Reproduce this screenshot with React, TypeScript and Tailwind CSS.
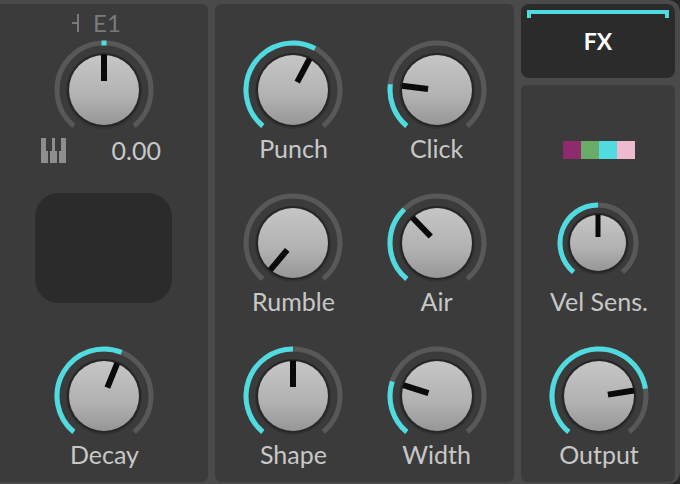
const CYAN = "#4fdbe0";
const TRACK = "#585858";

function polar(cx: number, cy: number, r: number, deg: number) {
  const a = ((deg - 90) * Math.PI) / 180;
  return [cx + r * Math.cos(a), cy + r * Math.sin(a)];
}

function arc(cx: number, cy: number, r: number, from: number, to: number) {
  const [x1, y1] = polar(cx, cy, r, from);
  const [x2, y2] = polar(cx, cy, r, to);
  const large = to - from > 180 ? 1 : 0;
  return `M${x1.toFixed(2)} ${y1.toFixed(2)}A${r} ${r} 0 ${large} 1 ${x2.toFixed(2)} ${y2.toFixed(2)}`;
}

function Dial({ angle, small = false, center = false }: { angle: number; small?: boolean; center?: boolean }) {
  const size = small ? 82 : 100;
  const c = size / 2;
  const r = small ? 38 : 47;
  const kr = small ? 28 : 35;
  const id = `g${small ? "s" : "l"}`;
  const [ix, iy] = polar(c, c, small ? 6 : 9, angle);
  const [ox, oy] = polar(c, c, kr + 0.5, angle);
  return (
    <svg width={size} height={size} viewBox={`0 0 ${size} ${size}`} className="block shrink-0">
      <defs>
        <linearGradient id={id} x1="0" y1="0" x2="0" y2="1">
          <stop offset="0" stopColor="#c6c6c6" />
          <stop offset="0.6" stopColor="#b1b1b1" />
          <stop offset="1" stopColor="#969696" />
        </linearGradient>
      </defs>
      <path d={arc(c, c, r, -140, 140)} fill="none" stroke={TRACK} strokeWidth={5} />
      {center ? (
        <rect x={c - 2.5} y={c - r - 2.5} width={5} height={5} fill={CYAN} />
      ) : angle > -140 ? (
        <path d={arc(c, c, r, -140, angle)} fill="none" stroke={CYAN} strokeWidth={5} />
      ) : null}
      <circle cx={c} cy={c + 1} r={kr + 3} fill="#333333" />
      <circle cx={c} cy={c} r={kr + 2} fill="#262626" />
      <circle cx={c} cy={c} r={kr} fill={`url(#${id})`} />
      <line x1={ix} y1={iy} x2={ox} y2={oy} stroke="#0a0a0a" strokeWidth={small ? 5 : 6} />
    </svg>
  );
}

function Knob({ angle, label, nudge = false }: { angle: number; label: string; nudge?: boolean }) {
  return (
    <div className="flex flex-col items-center">
      <Dial angle={angle} />
      <span className={nudge ? "mt-[-7px] ml-[2px] text-[25px] leading-[30px] text-[#c8c8c8]" : "mt-[-7px] text-[25px] leading-[30px] text-[#c8c8c8]"}>
        {label}
      </span>
    </div>
  );
}

function Piano() {
  return (
    <svg width="25" height="25" viewBox="0 0 25 25" className="block">
      <path
        fill="#8e8e8e"
        d="M0 0h5v13h2v12H0z M11 0h3v13h2v12H9V13h2z M20 0h5v25h-7V13h2z"
      />
    </svg>
  );
}

export default function App() {
  return (
    <div className="h-[484px] w-[680px] bg-[#262626]">
      <div
        className="flex h-[484px] w-[680px] gap-[7px] overflow-hidden rounded-r-[12px] bg-[#4a4a4a] pt-[4px] pr-[5px] text-[#c8c8c8]"
        style={{ fontFamily: "Lato, 'Open Sans', sans-serif" }}
      >
        <section className="flex h-[478px] w-[208px] flex-col items-center rounded-r-[6px] bg-[#3b3b3b] pr-[1px]">
          <div className="mt-[7px] flex h-[24px] items-center gap-[14px] pr-[14px] text-[24px] leading-[24px] text-[#7a7a7a]">
            <svg width="7" height="20" viewBox="0 0 7 20" className="block">
              <path fill="#7a7a7a" d="M5 1h2v18H5zM0 9h5v2H0z" />
            </svg>
            <span>E1</span>
          </div>
          <div className="mt-[5px]">
            <Dial angle={0} center />
          </div>
          <div className="mt-[-5px] flex w-full items-center justify-between pr-[46px] pl-[41px]">
            <Piano />
            <span className="text-[25px] leading-[30px]">0.00</span>
          </div>
          <div className="mt-[28px] h-[110px] w-[137px] rounded-[24px] bg-[#2b2b2b]" />
          <div className="mt-[43px]">
            <Knob angle={22} label="Decay" nudge />
          </div>
        </section>

        <section className="grid h-[478px] w-[299px] grid-cols-[144px_144px] content-start justify-center gap-y-[30px] rounded-[6px] bg-[#3b3b3b] pt-[36px]">
          <Knob angle={28} label="Punch" nudge />
          <Knob angle={-83} label="Click" />
          <Knob angle={-140} label="Rumble" nudge />
          <Knob angle={-44} label="Air" />
          <Knob angle={0} label="Shape" nudge />
          <Knob angle={-72} label="Width" />
        </section>

        <aside className="flex w-[154px] flex-col gap-[7px]">
          <button className="relative h-[74px] rounded-[8px] bg-[#2b2b2b] text-[23px] font-bold text-white">
            <span className="absolute top-[6px] right-[6px] left-[6px] h-[8px] border-x-[4px] border-t-[4px] border-[#4fdbe0]" />
            FX
          </button>
          <div className="flex h-[397px] flex-col items-center rounded-[6px] bg-[#3b3b3b] pl-[2px]">
            <div className="mt-[56px] flex">
              <span className="h-[18px] w-[18px] bg-[#8f2a6c]" />
              <span className="h-[18px] w-[18px] bg-[#68ac68]" />
              <span className="h-[18px] w-[18px] bg-[#4fdbe0]" />
              <span className="h-[18px] w-[18px] bg-[#efbace]" />
            </div>
            <div className="mt-[43px] flex flex-col items-center">
              <div className="mr-[2px]">
                <Dial angle={0} small />
              </div>
              <span className="mt-[2px] text-[25px] leading-[30px] text-[#c8c8c8]">Vel Sens.</span>
            </div>
            <div className="mt-[30px]">
              <Knob angle={81} label="Output" />
            </div>
          </div>
        </aside>
      </div>
    </div>
  );
}
